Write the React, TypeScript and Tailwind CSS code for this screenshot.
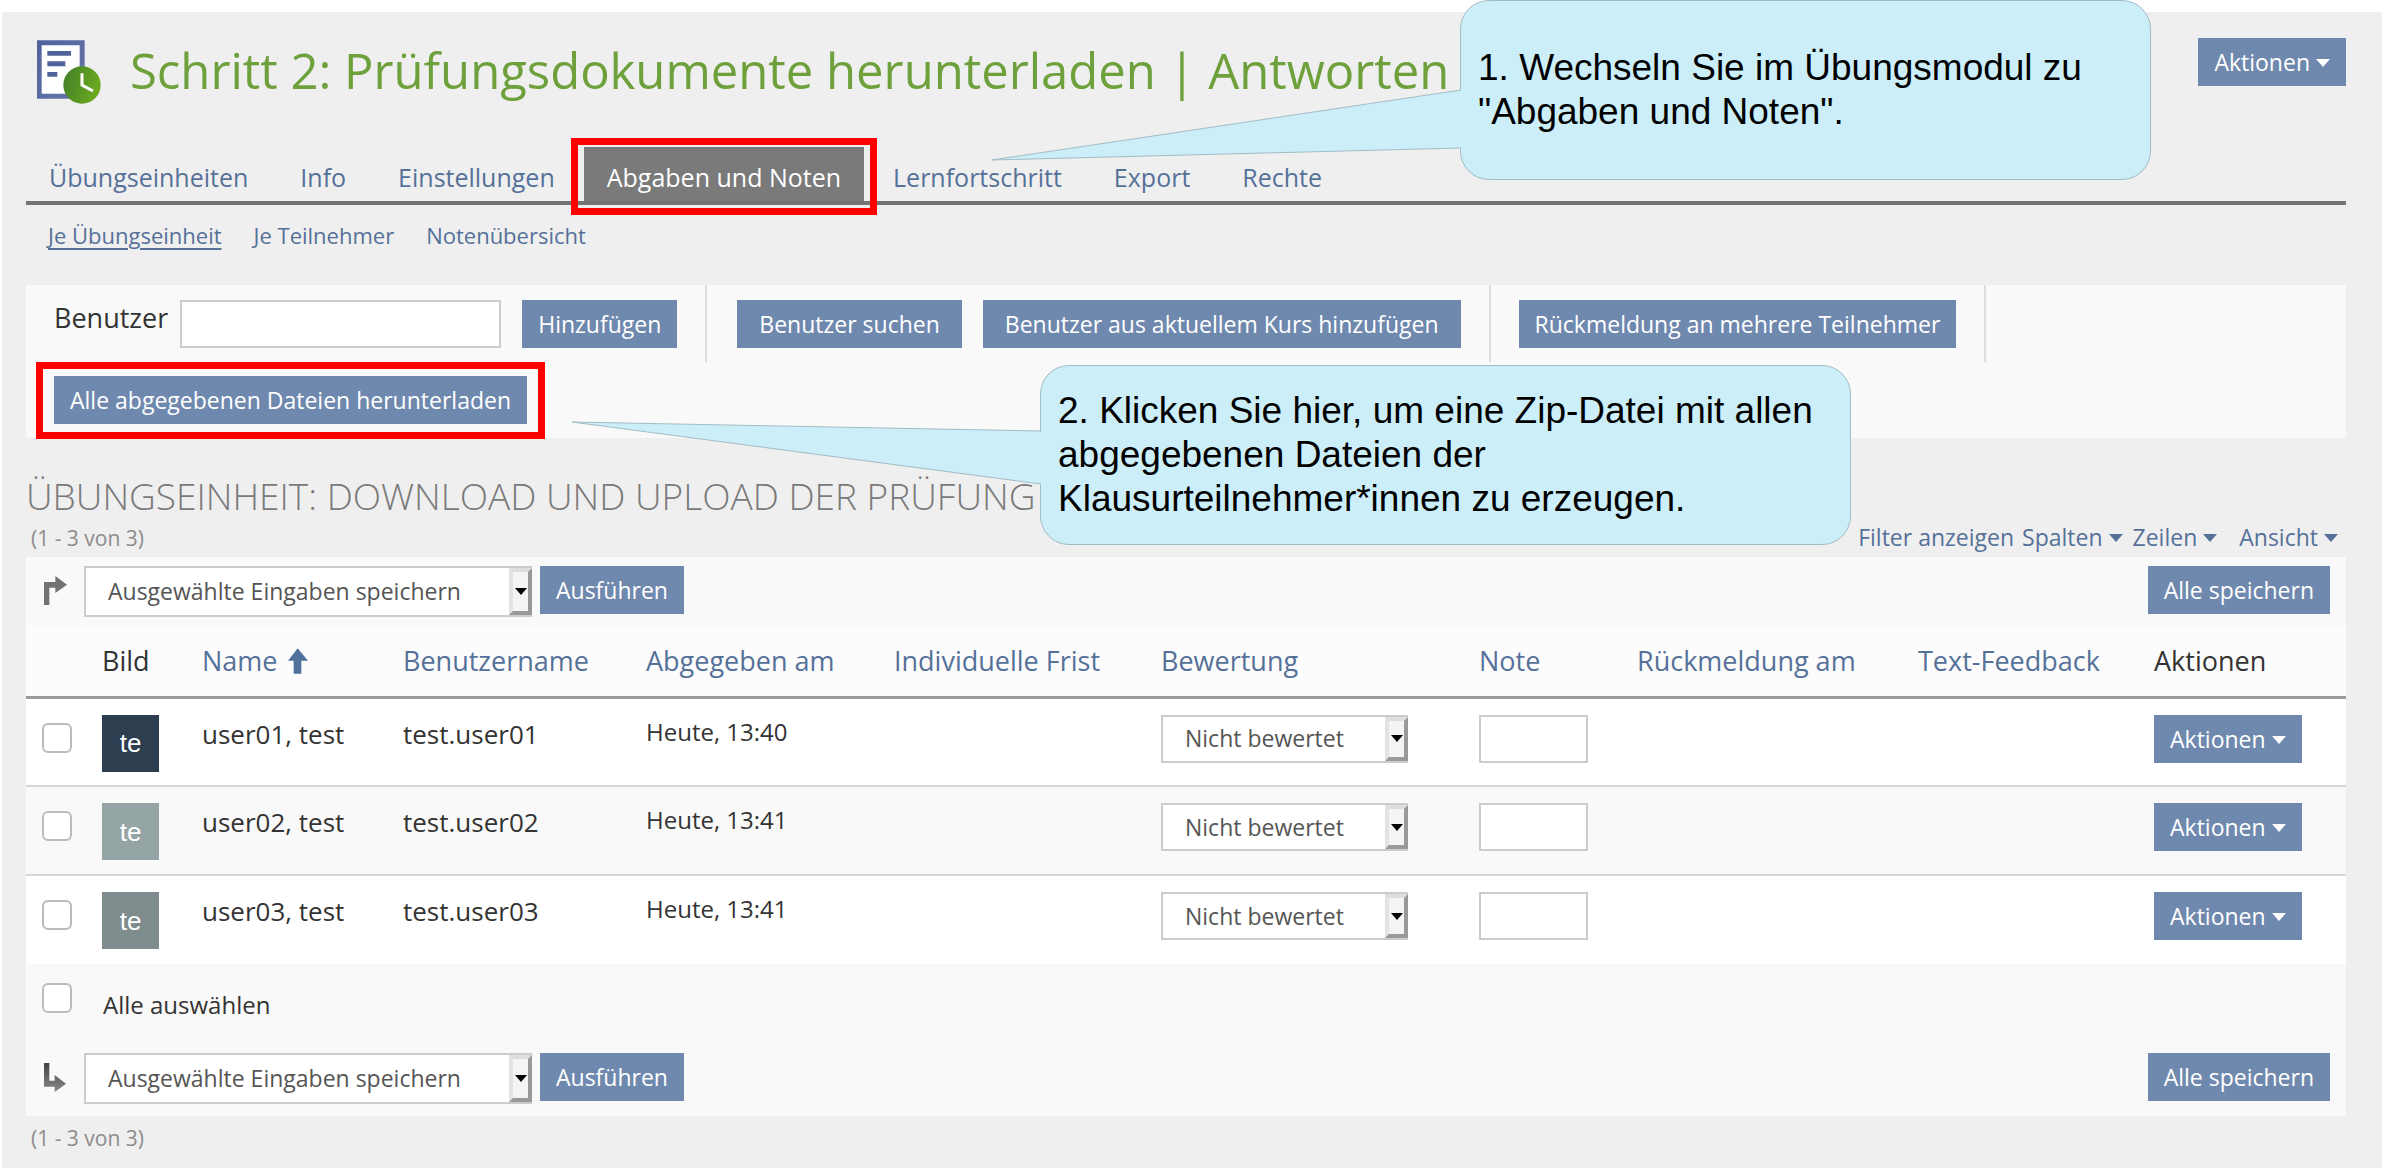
import type { ReactNode } from 'react';

const BUTTON =
  'relative h-12 shrink-0 cursor-pointer whitespace-nowrap bg-[#6f89ae] text-[23px] leading-8 text-white';

function Caret() {
  return (
    <svg viewBox="0 0 14 10" className="inline-block h-2.5 w-3.5 fill-current align-middle" aria-hidden="true">
      <path d="M0 2h14L7 10z" />
    </svg>
  );
}

function Button({ wide = false, children }: { wide?: boolean; children: ReactNode }) {
  return (
    <button type="button" className={`${BUTTON} ${wide ? 'px-[22px]' : 'px-4'}`}>
      {children}
    </button>
  );
}

function ActionsButton() {
  return (
    <Button>
      <span className="flex items-center gap-1.5">
        Aktionen <Caret />
      </span>
    </Button>
  );
}

function Highlight({ className }: { className: string }) {
  return <span aria-hidden="true" className={`pointer-events-none absolute border-[7px] border-[#ff0000] ${className}`} />;
}

function Select({ label, option, className }: { label: string; option: string; className: string }) {
  return (
    <div className={`relative ${className}`}>
      <select
        aria-label={label}
        className="size-full appearance-none border-2 border-[#cccccc] bg-white pl-[22px] text-[23px] text-[#555555]"
      >
        <option>{option}</option>
      </select>
      <span
        aria-hidden="true"
        className="pointer-events-none absolute inset-y-0.5 right-0 flex w-[23px] items-center justify-center border-4 border-t-[#dedede] border-r-[#999999] border-b-[#999999] border-l-[#e3e3e3] bg-[#f4f4f4] text-black"
      >
        <svg viewBox="0 0 12 7" className="h-[7px] w-3 shrink-0 fill-current">
          <path d="M0 0h12L6 7z" />
        </svg>
      </span>
    </div>
  );
}

function Checkbox({ label, id }: { label?: string; id?: string }) {
  return (
    <input
      type="checkbox"
      id={id}
      aria-label={label}
      className="block size-[30px] shrink-0 appearance-none rounded-md border-2 border-[#bbbbbb] bg-white"
    />
  );
}

function ExerciseIcon() {
  return (
    <svg viewBox="50 -2 192 192" className="size-16 shrink-0" aria-hidden="true">
      <defs>
        <linearGradient id="doc" x1="0" y1="0" x2="1" y2="1">
          <stop offset="0" stopColor="#4f629c" />
          <stop offset="1" stopColor="#6577a8" />
        </linearGradient>
        <linearGradient id="clock" x1="0" y1="0" x2="1" y2="0.3">
          <stop offset="0" stopColor="#417d28" />
          <stop offset="1" stopColor="#6aa81f" />
        </linearGradient>
      </defs>
      <path fill="url(#doc)" d="M50-1h143v175H50z" />
      <path fill="#fff" d="M64 14h114v145H64z" />
      <path fill="#50639a" d="M81 31h71v14H81zM81 62h54v15H81zM81 94h30v14H81z" />
      <circle cx="185" cy="133" r="56" fill="url(#clock)" />
      <path fill="none" stroke="#fff" strokeWidth="9" d="M185 98v35l33 18" />
    </svg>
  );
}

function ArrowUpRight() {
  return (
    <svg viewBox="42 80 69 87" className="h-[29px] w-[23px] fill-[#737373]" aria-hidden="true">
      <path d="M42 98h34V80l35 26-35 25v-16H58v52H42z" />
    </svg>
  );
}

function ArrowDownRight() {
  return (
    <svg viewBox="48 312 66 87" className="h-[29px] w-[22px]" aria-hidden="true">
      <defs>
        <linearGradient id="down" x1="0" y1="0" x2="0" y2="1">
          <stop offset="0" stopColor="#444" />
          <stop offset="1" stopColor="#888" />
        </linearGradient>
      </defs>
      <path fill="url(#down)" d="M48 312h16v53h16v-17l34 26-34 25v-16H48z" />
    </svg>
  );
}

function SortArrow() {
  return (
    <svg viewBox="774 293 60 77" className="h-[26px] w-5 fill-[#4f729c]" aria-hidden="true">
      <path d="M803 293l31 38h-20v39h-23v-39h-17z" />
    </svg>
  );
}

const TABS = ['Übungseinheiten', 'Info', 'Einstellungen', 'Abgaben und Noten', 'Lernfortschritt', 'Export', 'Rechte'];

function Tabs() {
  return (
    <nav className="flex gap-1.5 border-b-4 border-[#737373]">
      {TABS.map((tab) =>
        tab === 'Abgaben und Noten' ? (
          <a key={tab} href="#abgaben" className="relative bg-[#7a7a7a] px-[23px] pt-3.5 pb-2 text-[25px] leading-8 text-white">
            {tab}
            <Highlight className="-inset-x-[13px] -top-[9px] -bottom-3.5" />
          </a>
        ) : (
          <a key={tab} href="#tab" className="px-[23px] pt-3.5 pb-2 text-[25px] leading-8">
            {tab}
          </a>
        ),
      )}
    </nav>
  );
}

function Toolbar() {
  return (
    <section className="mt-[34px] flex flex-wrap bg-[#f9f9f9]">
      <div className="flex border-r-2 border-[#dddddd] pt-[15px] pr-7 pb-3.5 pl-7">
        <label htmlFor="user" className="pt-0.5 text-[27px] leading-8 text-[#333333]">
          Benutzer
        </label>
        <input id="user" type="text" className="ml-3 h-12 w-[321px] border-2 border-[#cccccc] bg-white px-3 text-[23px]" />
        <div className="ml-[21px]">
          <Button>Hinzufügen</Button>
        </div>
      </div>
      <div className="flex gap-[21px] border-r-2 border-[#dddddd] pt-[15px] pr-7 pb-3.5 pl-[30px]">
        <Button wide>Benutzer suchen</Button>
        <Button wide>Benutzer aus aktuellem Kurs hinzufügen</Button>
      </div>
      <div className="flex border-r-2 border-[#dddddd] px-7 pt-[15px] pb-3.5">
        <Button>Rückmeldung an mehrere Teilnehmer</Button>
      </div>
      <div className="flex px-7 py-3.5">
        <Button>
          Alle abgegebenen Dateien herunterladen
          <Highlight className="-inset-x-[18px] -top-3.5 -bottom-[15px]" />
        </Button>
      </div>
    </section>
  );
}

function BulkBar({ icon, className }: { icon: ReactNode; className: string }) {
  return (
    <div className={`flex items-start bg-[#f9f9f9] pr-4 ${className}`}>
      <div className="flex h-12 w-[58px] items-center pl-[18px]">{icon}</div>
      <Select label="Aktion" option="Ausgewählte Eingaben speichern" className="h-[51px] w-[448px]" />
      <div className="ml-2">
        <Button>Ausführen</Button>
      </div>
      <div className="ml-auto">
        <Button>Alle speichern</Button>
      </div>
    </div>
  );
}

const USERS = [
  { name: 'user01, test', login: 'test.user01', date: 'Heute, 13:40', row: 'bg-white border-b-2', avatar: 'bg-[#2c3e50]' },
  { name: 'user02, test', login: 'test.user02', date: 'Heute, 13:41', row: 'bg-[#f9f9f9] border-b-2', avatar: 'bg-[#95a5a6]' },
  { name: 'user03, test', login: 'test.user03', date: 'Heute, 13:41', row: 'bg-white', avatar: 'bg-[#7f8c8d]' },
];

function Heading({ children }: { children: ReactNode }) {
  return (
    <th scope="col" className="px-3 text-left font-normal">
      {children}
    </th>
  );
}

function SortLink({ children }: { children: ReactNode }) {
  return (
    <a href="#sort" className="whitespace-nowrap text-[#557199]">
      {children}
    </a>
  );
}

function UserTable() {
  return (
    <table className="w-full table-fixed border-collapse text-[#333333]">
      <colgroup>
        <col className="w-[64px]" />
        <col className="w-[100px]" />
        <col className="w-[201px]" />
        <col className="w-[243px]" />
        <col className="w-[248px]" />
        <col className="w-[267px]" />
        <col className="w-[318px]" />
        <col className="w-[158px]" />
        <col className="w-[281px]" />
        <col className="w-[236px]" />
        <col className="w-[204px]" />
      </colgroup>
      <thead>
        <tr className="h-[71px] border-b-[3px] border-[#9a9a9a] bg-[#fcfcfc] text-[27px] leading-8">
          <td />
          <Heading>Bild</Heading>
          <Heading>
            <span className="flex items-center gap-2.5">
              <SortLink>Name</SortLink>
              <SortArrow />
            </span>
          </Heading>
          <Heading><SortLink>Benutzername</SortLink></Heading>
          <Heading><SortLink>Abgegeben am</SortLink></Heading>
          <Heading><SortLink>Individuelle Frist</SortLink></Heading>
          <Heading><SortLink>Bewertung</SortLink></Heading>
          <Heading><SortLink>Note</SortLink></Heading>
          <Heading><SortLink>Rückmeldung am</SortLink></Heading>
          <Heading><SortLink>Text-Feedback</SortLink></Heading>
          <Heading>Aktionen</Heading>
        </tr>
      </thead>
      <tbody>
        {USERS.map((u) => (
          <tr key={u.name} className={`h-[89px] border-[#d6d6d6] align-top ${u.row}`}>
            <td className="pt-6 pl-4">
              <Checkbox label={`${u.name} auswählen`} />
            </td>
            <td className="px-3 pt-4">
              <div
                className={`flex size-[57px] items-center justify-center font-['Liberation_Sans',sans-serif] text-[26px] leading-8 text-white ${u.avatar}`}
              >
                te
              </div>
            </td>
            <td className="px-3 pt-[19px] text-[26px] leading-8">{u.name}</td>
            <td className="px-3 pt-[19px] text-[26px] leading-8">{u.login}</td>
            <td className="px-3 pt-[17px] text-2xl leading-8">{u.date}</td>
            <td />
            <td className="px-3 pt-4">
              <Select label={`Bewertung ${u.name}`} option="Nicht bewertet" className="h-12 w-[247px]" />
            </td>
            <td className="px-3 pt-4">
              <input
                type="text"
                aria-label={`Note ${u.name}`}
                className="block h-12 w-[109px] border-2 border-[#cccccc] bg-white px-3 text-[23px]"
              />
            </td>
            <td />
            <td />
            <td className="px-3 pt-4">
              <ActionsButton />
            </td>
          </tr>
        ))}
      </tbody>
    </table>
  );
}

function Callout({ className, tail, children }: { className: string; tail: ReactNode; children: ReactNode }) {
  return (
    <aside
      className={`absolute flex h-[180px] items-center rounded-[29px] border border-[#a3bcc4] bg-[#cbeef8] pl-[17px] font-['Liberation_Sans',sans-serif] text-[37px] leading-[44px] text-black ${className}`}
    >
      {tail}
      <p className="whitespace-nowrap">{children}</p>
    </aside>
  );
}

export default function App() {
  return (
    <div className="relative bg-white pt-3 font-['Open_Sans',sans-serif]">
      <main className="mx-0.5 bg-[#efefef] pr-9 pb-4 pl-6 text-[#557199]">
        <header className="flex h-[135px] items-start pt-6 pl-[11px]">
          <div className="pt-1">
            <ExerciseIcon />
          </div>
          <h1 className="ml-[29px] text-[49px] leading-[68px] whitespace-nowrap text-[#6ea03c]">
            Schritt 2: Prüfungsdokumente herunterladen | Antworten
          </h1>
          <div className="ml-auto pt-0.5">
            <ActionsButton />
          </div>
        </header>

        <Tabs />
        <nav className="flex gap-8 pt-3.5 pl-[22px] text-[22px] leading-8">
          <a href="#einheit" className="underline underline-offset-4">Je Übungseinheit</a>
          <a href="#teilnehmer">Je Teilnehmer</a>
          <a href="#noten">Notenübersicht</a>
        </nav>

        <Toolbar />

        <h2 className="mt-[34px] text-[37px] leading-[48px] font-light whitespace-nowrap text-[#7a7a7a]">
          ÜBUNGSEINHEIT: DOWNLOAD UND UPLOAD DER PRÜFUNG
        </h2>
        <div className="mt-[3px] flex items-baseline pb-[5px] pl-[5px] leading-7">
          <span className="text-[21px] leading-7 text-[#8c8c8c]">(1 - 3 von 3)</span>
          <nav className="ml-auto flex items-baseline pr-2 text-[23px] leading-7">
            <a href="#filter">Filter anzeigen</a>
            <a href="#spalten" className="ml-2 flex items-center gap-1.5">Spalten <Caret /></a>
            <a href="#zeilen" className="ml-2.5 flex items-center gap-1.5">Zeilen <Caret /></a>
            <a href="#ansicht" className="ml-[22px] flex items-center gap-1.5">Ansicht <Caret /></a>
          </nav>
        </div>

        <form>
          <BulkBar icon={<ArrowUpRight />} className="py-[9px]" />
          <UserTable />
          <div className="flex items-start gap-[31px] bg-[#f9f9f9] pt-[19px] pb-8 pl-4 text-[#333333]">
            <Checkbox id="all" />
            <label htmlFor="all" className="pt-1.5 text-2xl leading-8">Alle auswählen</label>
          </div>
          <BulkBar icon={<ArrowDownRight />} className="pb-3" />
        </form>
        <p className="mt-2 pl-[5px] text-[21px] leading-7 text-[#8c8c8c]">(1 - 3 von 3)</p>
      </main>

      <Callout
        className="top-0 left-[1460px] w-[691px]"
        tail={
          <svg viewBox="0 0 470 72" className="absolute top-[88px] -left-[470px] h-[72px] w-[470px]" aria-hidden="true">
            <path d="M470 1L1 71l469-12" className="fill-[#cbeef8] stroke-[#a3bcc4]" />
          </svg>
        }
      >
        1. Wechseln Sie im Übungsmodul zu
        <br />
        "Abgaben und Noten".
      </Callout>
      <Callout
        className="top-[365px] left-[1040px] w-[811px]"
        tail={
          <svg viewBox="0 0 470 64" className="absolute top-[55px] -left-[470px] h-16 w-[470px]" aria-hidden="true">
            <path d="M470 10L1 1l469 62" className="fill-[#cbeef8] stroke-[#a3bcc4]" />
          </svg>
        }
      >
        2. Klicken Sie hier, um eine Zip-Datei mit allen
        <br />
        abgegebenen Dateien der
        <br />
        Klausurteilnehmer*innen zu erzeugen.
      </Callout>
    </div>
  );
}
